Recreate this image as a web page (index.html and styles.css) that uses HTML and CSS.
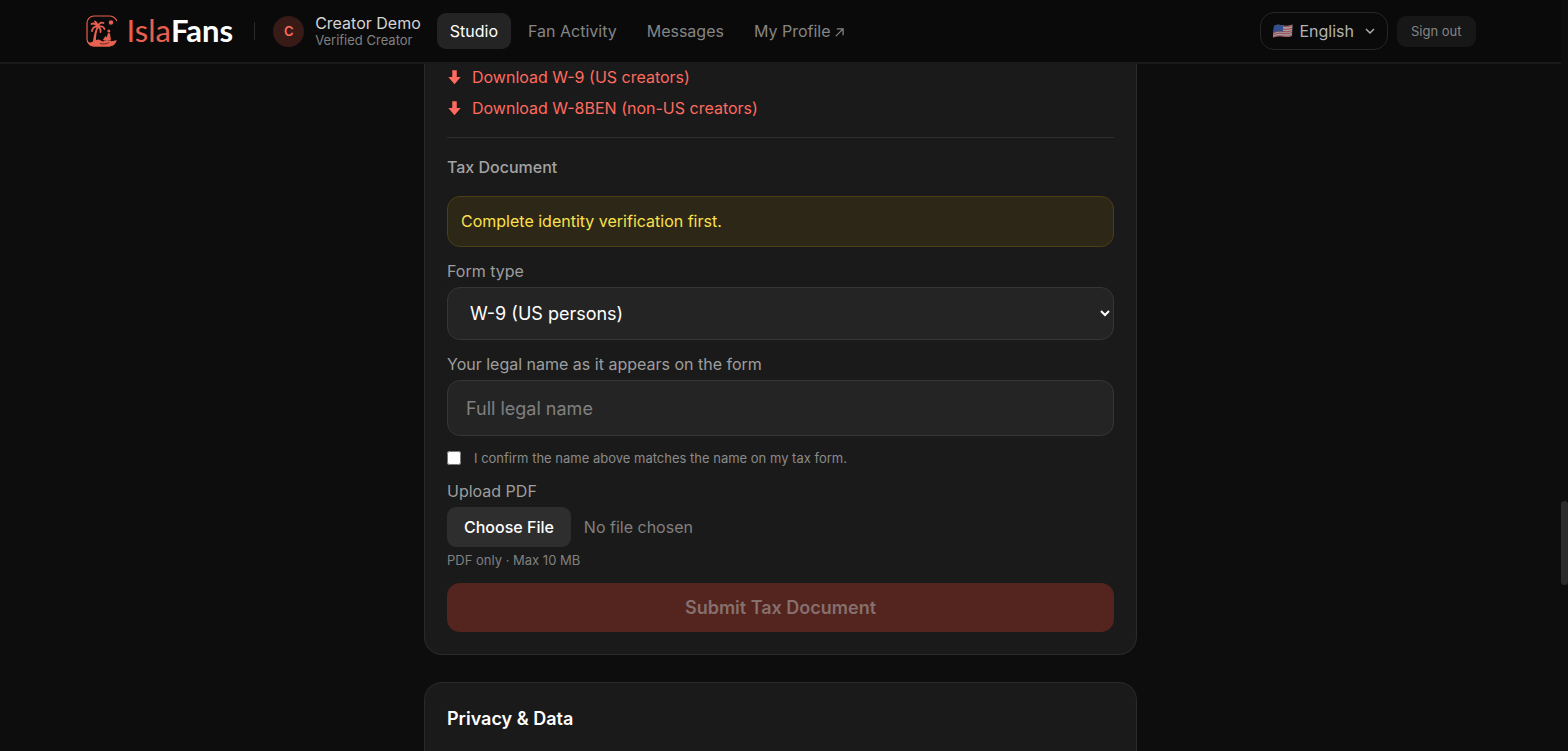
FILE: index.html
```html
<!DOCTYPE html>
<html lang="en">
	<head>
		<meta charset="UTF-8" />
		<meta name="viewport" content="width=device-width, initial-scale=1.0" />
		<title>IslaFans Studio</title>
		<link rel="stylesheet" href="styles.css">
	</head>
	<body>
		<div class="page">
			<header class="topbar">
				<div class="topbar-inner">
					<a class="brand" href="#">
						<svg class="brand-icon" viewBox="0 0 32 32" aria-hidden="true">
							<path d="M24 31H8a7 7 0 0 1-7-7V8a7 7 0 0 1 7-7h15c4 0 6 1 8 5" fill="none" stroke="currentColor" stroke-width="1.2" />
							<circle cx="25" cy="7.500" r="2.200" />
							<!-- palm -->
							<path d="M11 11.500c-2 4-3.500 9-4 15.500h3c-.3-6 .8-11 2.500-15z" />
							<path d="M12 12C10 9 8 7.500 5.500 9M12 12C9 11 6.500 12.500 6 16M12 12c-.5-3-1-4.500-3-5.500M12 12c.5-3.500 3-5 5.500-4M12 12c3-1.500 5.500-.5 6.500 2M12 12c2 1 3 2.500 2.500 5" fill="none" stroke="currentColor" stroke-width="1.800" stroke-linecap="round" />
							<!-- seated figure -->
							<circle cx="22.800" cy="16" r="1.500" />
							<path d="M22 18l2 .5 1 7h-7l-1-1 2.500-3.500 1.200 1.500z" />
							<!-- island -->
							<path d="M1.500 27c3 1 4.500.5 6.500-1.500l4.500-1 4.500 2 4-1.500c3 1.500 6 1.500 9.700 0-.8 4.500-4 6.500-8.200 6.500H8c-3 0-5-1.500-6.500-4.500z" />
							<path d="M14 28.500c3 1 6 .5 9-1" fill="none" stroke="#0a0a0a" stroke-width=".6" />
						</svg>
						<span class="brand-name">Isla<b>Fans</b></span>
					</a>
					<span class="separator"></span>
					<div class="creator">
						<span class="avatar">C</span>
						<div class="creator-info">
							<div class="creator-name">Creator Demo</div>
							<div class="creator-status">Verified Creator</div>
						</div>
					</div>
					<nav class="nav">
						<a class="nav-link active" href="#">Studio</a>
						<a class="nav-link" href="#">Fan Activity</a>
						<a class="nav-link" href="#">Messages</a>
						<a class="nav-link" href="#">My Profile
							<svg class="external" viewBox="0 0 10 10" aria-hidden="true"><path d="M1 9L9 1M2 1h7v7" /></svg>
						</a>
					</nav>
					<div class="actions">
						<button class="language" type="button">
							<svg class="flag" viewBox="0 0 20 14" aria-hidden="true">
								<path d="M1 2c4-2 6-1 9-.5s6 .5 9.500-1L19 12c-4 1.500-6 1-9 .5s-6-.5-10 1z" fill="#a89a9e" />
								<path d="M10 2.300c3 .5 6 .3 9.300-.8M10 5c3 .5 6 .3 9.200-.8M1 10.500c4-1.500 6-1.500 9-1s6 .5 9-1M1 8.500c4-1.500 6-1.500 9-1s6 .5 9-1M.5 13c4-1.500 6-1.500 9.500-1s6 .5 9-1" fill="none" stroke="#98454b" />
								<path d="M1 2c4-2 6-1 9-.5V7.500c-3-.5-5-.5-9.400 1z" fill="#34508c" />
							</svg>
							English
							<svg class="chevron" viewBox="0 0 10 10" aria-hidden="true"><path d="M1 3l4 4 4-4" /></svg>
						</button>
						<button class="sign-out" type="button">Sign out</button>
					</div>
				</div>
			</header>

			<main class="content">
				<section class="card card-tax">
					<div class="downloads">
						<a class="download" href="#">
							<svg viewBox="0 0 12 16" aria-hidden="true"><path d="M4 1h4v6h3.500L6 13.500.5 7H4z" /></svg>
							Download W-9 (US creators)
						</a>
						<a class="download" href="#">
							<svg viewBox="0 0 12 16" aria-hidden="true"><path d="M4 1h4v6h3.500L6 13.500.5 7H4z" /></svg>
							Download W-8BEN (non-US creators)
						</a>
					</div>

					<form class="tax-form">
						<h3>Tax Document</h3>
						<p class="notice">Complete identity verification first.</p>

						<div class="field">
							<label for="formType">Form type</label>
							<select id="formType">
								<option>W-9 (US persons)</option>
								<option>W-8BEN (non-US persons)</option>
							</select>
						</div>

						<div class="field">
							<label for="legalName">Your legal name as it appears on the form</label>
							<input type="text" id="legalName" placeholder="Full legal name" />
						</div>

						<div class="confirm">
							<input type="checkbox" id="confirmName" />
							<label for="confirmName">I confirm the name above matches the name on my tax form.</label>
						</div>

						<div class="field">
							<label for="taxPdf">Upload PDF</label>
							<input type="file" id="taxPdf" accept="application/pdf" />
							<p class="hint">PDF only · Max 10 MB</p>
						</div>

						<button class="submit" type="submit" disabled>Submit Tax Document</button>
					</form>
				</section>

				<section class="card card-privacy">
					<h2>Privacy &amp; Data</h2>
				</section>
			</main>
		</div>

		<div class="scroll-track"><div class="scroll-thumb"></div></div>
	</body>
</html>
```

FILE: styles.css
```css
* {
	box-sizing: border-box;
}

body {
	margin: 0;
	height: 100vh;
	display: flex;
	overflow: hidden;
	background: #0d0d0d;
	color: #ffffff;
	font-family: Inter, "Liberation Sans", sans-serif;
	font-size: 16px;
	line-height: 23px;
}

h2,
h3,
p {
	margin: 0;
}

a {
	text-decoration: none;
}

button,
input,
select {
	font-family: inherit;
}

.page {
	flex: 1;
	min-width: 0;
	display: flex;
	flex-direction: column;
}

/* Top bar */
.topbar {
	flex: none;
	background: #0a0a0a;
	border-bottom: 2px solid #1a1a1a;
}

.topbar-inner {
	display: flex;
	align-items: center;
	max-width: 1390px;
	height: 62px;
	margin: 0 auto;
}

.brand {
	display: flex;
	align-items: center;
	gap: 9px;
	color: #e8604f;
}

.brand-icon {
	width: 32px;
	height: 32px;
	fill: currentColor;
}

.brand-name {
	font-family: Lato, sans-serif;
	font-size: 31px;
	line-height: 36px;
	padding-bottom: 3px;
}

.brand-name b {
	color: #ffffff;
}

.separator {
	width: 1px;
	height: 18px;
	margin: 0 18px 0 21px;
	background: #2a2a2a;
}

.creator {
	display: flex;
	align-items: center;
	gap: 11px;
}

.avatar {
	width: 31px;
	height: 31px;
	border-radius: 50%;
	background: #381a17;
	color: #ff6b5e;
	font-size: 13px;
	font-weight: 600;
	line-height: 31px;
	text-align: center;
}

.creator-name {
	color: #d4d4d4;
	line-height: 18px;
}

.creator-status {
	color: #808080;
	font-size: 13px;
	line-height: 16px;
}

.nav {
	display: flex;
	gap: 4px;
	margin-left: 16px;
}

.nav-link {
	padding: 7px 13px;
	border-radius: 9px;
	color: #858585;
	line-height: 22px;
}

.nav-link.active {
	background: #242424;
	color: #ffffff;
}

.external {
	width: 9px;
	height: 9px;
	fill: none;
	stroke: currentColor;
	stroke-width: 1.4;
}

.actions {
	display: flex;
	align-items: center;
	gap: 9px;
	margin-left: auto;
}

.language {
	display: flex;
	align-items: center;
	gap: 6px;
	height: 38px;
	padding: 0 12px;
	border: 1px solid #262626;
	border-radius: 14px;
	background: transparent;
	color: #b3b3b3;
	font-size: 16px;
}

.flag {
	width: 20px;
	height: 14px;
}

.chevron {
	width: 10px;
	height: 10px;
	margin-left: 5px;
	fill: none;
	stroke: currentColor;
	stroke-width: 1.4;
}

.sign-out {
	height: 31px;
	padding: 0 14px;
	border: 0;
	border-radius: 9px;
	background: #171717;
	color: #858585;
	font-size: 13px;
}

/* Cards */
.content {
	flex: 1;
	min-height: 0;
	display: flex;
	flex-direction: column;
	gap: 27px;
	width: 100%;
	max-width: 713px;
	margin: 0 auto;
}

.card {
	padding: 22px;
	border: 1px solid #2a2a2a;
	border-radius: 18px;
	background: #1a1a1a;
}

.card-tax {
	padding-top: 2px;
	border-top: 0;
	border-top-left-radius: 0;
	border-top-right-radius: 0;
}

.card-privacy {
	flex: 1;
	border-bottom: 0;
	border-bottom-left-radius: 0;
	border-bottom-right-radius: 0;
}

.card h2 {
	font-size: 18px;
	font-weight: 600;
	line-height: 27px;
}

.downloads {
	display: flex;
	flex-direction: column;
	align-items: flex-start;
	gap: 8px;
	padding-bottom: 17px;
	border-bottom: 1px solid #2e2e2e;
}

.download {
	display: flex;
	align-items: center;
	gap: 10px;
	color: #ff6b5e;
}

.download svg {
	width: 15px;
	height: 18px;
	fill: currentColor;
}

/* Tax form */
.tax-form {
	display: flex;
	flex-direction: column;
	gap: 13px;
	padding-top: 18px;
}

.tax-form h3 {
	margin-bottom: 4px;
	color: #a3a3a3;
	font-size: 16px;
	font-weight: 500;
}

.notice {
	padding: 13px;
	border: 1px solid #4a3f16;
	border-radius: 13px;
	background: #2d2717;
	color: #fbe14b;
}

.field {
	display: flex;
	flex-direction: column;
	gap: 4px;
	color: #9e9e9e;
}

.field select,
.field input[type="text"] {
	width: 100%;
	padding: 0 18px;
	border: 1px solid #363636;
	border-radius: 13px;
	background-color: #242424;
	color: #ffffff;
	font-size: 18px;
}

.field select {
	height: 53px;
	padding-right: 0;
}

.field input[type="text"] {
	height: 56px;
}

.field input::placeholder {
	color: #808080;
}

.field input[type="file"] {
	height: 40px;
	color: #808080;
	font-size: 16px;
}

.field input::file-selector-button {
	height: 40px;
	margin-right: 13px;
	padding: 0 17px;
	border: 0;
	border-radius: 9px;
	background: #2e2e2e;
	color: #ffffff;
	font-family: inherit;
	font-size: 16px;
	font-weight: 500;
}

.confirm {
	display: flex;
	align-items: center;
	gap: 13px;
	color: #8a8a8a;
	font-size: 13px;
	line-height: 18px;
}

.confirm input {
	width: 14px;
	height: 14px;
	margin: 0;
}

.hint {
	color: #808080;
	font-size: 13px;
	line-height: 19px;
}

.submit {
	height: 49px;
	border: 0;
	border-radius: 13px;
	background: #54241f;
	color: #85706e;
	font-size: 18px;
	font-weight: 600;
}

/* Scrollbar */
.scroll-track {
	width: 7px;
	background: #0d0d0d;
	display: flex;
	flex-direction: column;
}

.scroll-track::before {
	content: "";
	flex: 501;
}

.scroll-track::after {
	content: "";
	flex: 166;
}

.scroll-thumb {
	flex: 84;
	border-radius: 4px;
	background: #2a2a2a;
}
```
